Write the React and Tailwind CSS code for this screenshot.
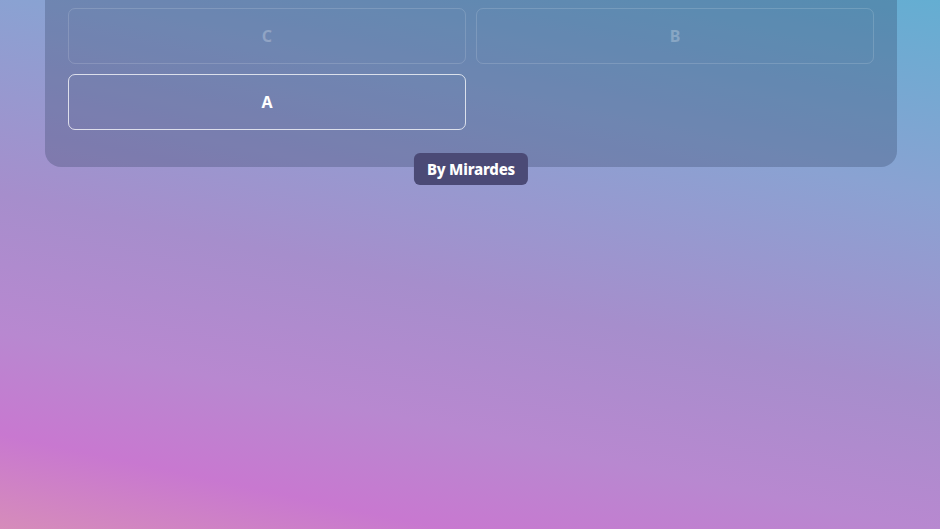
const options = [
  { label: "C", active: false },
  { label: "B", active: false },
  { label: "A", active: true },
];

function OptionButton({ label, active }) {
  return (
    <button
      className={
        active
          ? "h-[56px] rounded-[7px] border border-white/75 text-[16px] font-bold text-white"
          : "h-[56px] rounded-[7px] border border-white/15 text-[16px] font-bold text-white/25"
      }
    >
      {label}
    </button>
  );
}

export default function App() {
  return (
    <div
      className="min-h-[529px] w-full overflow-hidden bg-[linear-gradient(12deg,#d68cba_0%,#c878d0_13%,#b888d0_27%,#a68ecc_46%,#8aa2d2_73%,#64aed2_100%)]"
      style={{ fontFamily: '"Noto Sans", Inter, "Liberation Sans", sans-serif' }}
    >
      <div className="relative ml-[45px] mr-[43px] -mt-[40px] rounded-[16px] bg-[rgba(40,55,90,0.27)] px-[23px] pb-[37px] pt-[48px]">
        <div className="grid grid-cols-2 gap-[10px]">
          {options.map((o) => (
            <OptionButton key={o.label} label={o.label} active={o.active} />
          ))}
        </div>
        <div className="absolute bottom-[-18px] left-1/2 flex h-[32px] -translate-x-1/2 items-center rounded-[6px] bg-[#4b4a76] px-[13px] text-[15px] font-extrabold tracking-[-0.2px] text-white">
          By Mirardes
        </div>
      </div>
    </div>
  );
}
